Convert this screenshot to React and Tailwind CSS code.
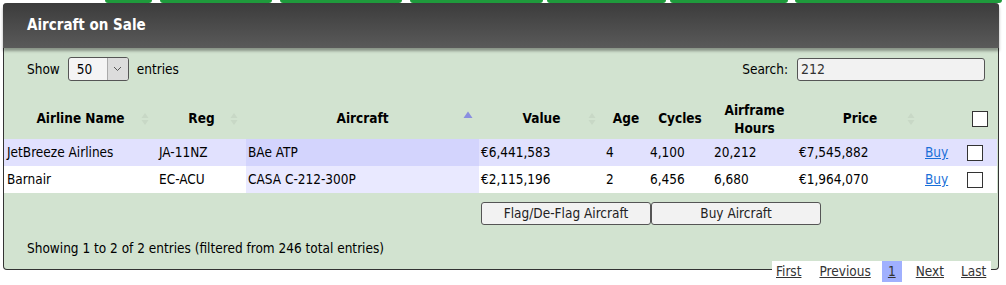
import React from 'react';

const rows = [
  { airline: 'JetBreeze Airlines', reg: 'JA-11NZ', aircraft: 'BAe ATP', value: '€6,441,583', age: '4', cycles: '4,100', hours: '20,212', price: '€7,545,882' },
  { airline: 'Barnair', reg: 'EC-ACU', aircraft: 'CASA C-212-300P', value: '€2,115,196', age: '2', cycles: '6,456', hours: '6,680', price: '€1,964,070' },
];

const tabs = [
  [105, 152], [160, 272], [280, 402], [410, 543], [547, 666], [670, 788], [795, 1002],
];

const SortBoth = () => (
  <svg width="8" height="14" viewBox="0 0 8 14" className="absolute right-[8px] top-1/2 -translate-y-1/2">
    <path d="M4 1 L7.5 6 L0.5 6 Z" fill="#c8d8c6" />
    <path d="M4 13 L7.5 8 L0.5 8 Z" fill="#c8d8c6" />
  </svg>
);

const SortAsc = () => (
  <svg width="10" height="8" viewBox="0 0 10 8" className="absolute right-[6px] top-[13px]">
    <path d="M5 0.5 L9.5 7 L0.5 7 Z" fill="#8a8fe0" />
  </svg>
);

const Box = ({ className = '' }) => (
  <span className={`block w-[16px] h-[16px] border-[1.5px] border-[#333] bg-white ${className}`} />
);

export default function App() {
  const th = 'relative text-center font-bold text-[13.5px] text-black align-middle px-[2px]';
  return (
    <div className="w-[1006px] h-[285px] bg-white relative overflow-hidden" style={{ fontFamily: '"DejaVu Sans Condensed", "DejaVu Sans", sans-serif' }}>
      {/* tabs peeking above */}
      <div className="h-[3px] flex">
        {tabs.map(([a, b], i) => (
          <div key={i} className="h-[3px] bg-[#1f9a3c] rounded-b-[3px]" style={{ marginLeft: i === 0 ? a : a - tabs[i - 1][1], width: b - a }} />
        ))}
      </div>

      <div className="ml-[3px] w-[996px] h-[267px] border border-t-0 border-[#333] rounded-[4px] bg-[#d2e3d0] flex flex-col">
        {/* header */}
        <div className="relative z-10 h-[45px] -mx-[1px] rounded-t-[4px] bg-gradient-to-b from-[#3c3c3c] to-[#5a5a5a] shadow-[0_3px_3px_rgba(0,0,0,0.35)] flex items-center pl-[24px]">
          <span className="text-white font-bold text-[15px]">Aircraft on Sale</span>
        </div>

        {/* controls */}
        <div className="mt-[9px] h-[24px] flex items-center justify-between pl-[23px] pr-[13px] text-[13.5px] text-black">
          <div className="flex items-center">
            <span>Show</span>
            <div className="ml-[8px] w-[61px] h-[24px] border border-[#555] rounded-[3px] bg-[#f4f4f4] flex overflow-hidden">
              <span className="flex-1 pl-[8px] leading-[22px]">50</span>
              <span className="w-[21px] bg-[#dcdcdc] border-l border-[#aaa] flex items-center justify-center">
                <svg width="9" height="6" viewBox="0 0 9 6"><path d="M1 1 L4.5 4.5 L8 1" fill="none" stroke="#555" strokeWidth="1" /></svg>
              </span>
            </div>
            <span className="ml-[8px]">entries</span>
          </div>
          <div className="flex items-center">
            <span>Search:</span>
            <div className="ml-[9px] w-[188px] h-[23px] border border-[#555] rounded-[3px] bg-[#f2f2f2] pl-[3px] leading-[21px] text-[14px] text-[#333]">212</div>
          </div>
        </div>

        {/* table */}
        <table className="mt-[17px] w-[993px] table-fixed border-collapse text-[13.5px] text-black">
          <colgroup>
            <col className="w-[153px]" />
            <col className="w-[89px]" />
            <col className="w-[233px]" />
            <col className="w-[125px]" />
            <col className="w-[44px]" />
            <col className="w-[64px]" />
            <col className="w-[85px]" />
            <col className="w-[126px]" />
            <col className="w-[40px]" />
            <col className="w-[34px]" />
          </colgroup>
          <thead>
            <tr className="h-[41px]">
              <th className={th}>Airline Name<SortBoth /></th>
              <th className={th}>Reg<SortBoth /></th>
              <th className={th}>Aircraft<SortAsc /></th>
              <th className={th}>Value<SortBoth /></th>
              <th className={th}>Age</th>
              <th className={th}>Cycles</th>
              <th className={`${th} leading-[18px]`}>Airframe<br />Hours</th>
              <th className={th}>Price<SortBoth /></th>
              <th className={th}></th>
              <th className={th}><Box className="mx-auto" /></th>
            </tr>
          </thead>
          <tbody>
            {rows.map((r, i) => {
              const odd = i === 0;
              const base = odd ? 'bg-[#e1e1fe]' : 'bg-white';
              const sorted = odd ? 'bg-[#d3d4fd]' : 'bg-[#e9e9ff]';
              const td = 'px-[2px] text-left whitespace-nowrap';
              return (
                <tr key={i} className={`h-[27px] ${base}`}>
                  <td className={`${td} pl-[3px]`}>{r.airline}</td>
                  <td className={td}>{r.reg}</td>
                  <td className={`${td} ${sorted}`}>{r.aircraft}</td>
                  <td className={td}>{r.value}</td>
                  <td className={td}>{r.age}</td>
                  <td className={td}>{r.cycles}</td>
                  <td className={td}>{r.hours}</td>
                  <td className={td}><span>{r.price}</span></td>
                  <td className={td}><a href="#" className="text-[#1a6fd8] underline">Buy</a></td>
                  <td className="pl-[4px]"><Box /></td>
                </tr>
              );
            })}
          </tbody>
        </table>

        {/* action buttons */}
        <div className="mt-[9px] flex pl-[477px] text-[13.5px] text-[#222]">
          <button className="w-[170px] h-[23px] border border-[#555] rounded-[3px] bg-[#f2f2f2]">Flag/De-Flag Aircraft</button>
          <button className="w-[170px] h-[23px] border border-[#555] rounded-[3px] bg-[#f2f2f2]">Buy Aircraft</button>
        </div>

        <div className="mt-[13px] pl-[23px] text-[13.5px] text-black">Showing 1 to 2 of 2 entries (filtered from 246 total entries)</div>
      </div>

      {/* pagination overlapping bottom border */}
      <div className="relative z-10 -mt-[9px] ml-auto mr-[15px] w-[219px] h-[21px] bg-white flex items-center text-[13.5px] text-[#333]">
        <a href="#" className="ml-[4px] underline">First</a>
        <a href="#" className="ml-[18px] underline">Previous</a>
        <a href="#" className="ml-[11px] shrink-0 w-[20px] h-[21px] bg-[#a0b0fe] flex items-center justify-center underline">1</a>
        <a href="#" className="ml-[14px] underline">Next</a>
        <a href="#" className="ml-[17px] underline">Last</a>
      </div>
    </div>
  );
}
